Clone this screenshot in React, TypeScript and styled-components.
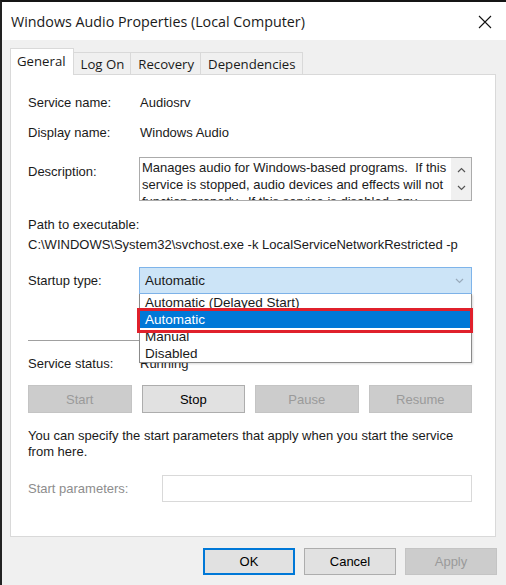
import styled, { createGlobalStyle, css } from 'styled-components';

const GlobalStyle = createGlobalStyle`
  *, *::before, *::after {
    box-sizing: border-box;
  }
  html, body {
    margin: 0;
    padding: 0;
    background: #1a1a1a;
  }
  body {
    font-family: "Liberation Sans", Arial, sans-serif;
    color: #000;
  }
`;

const Window = styled.div`
  width: 506px;
  height: 585px;
  border-top: 2px solid #151515;
  border-left: 2px solid #222;
  background: #f0f0f0;
  display: flex;
  flex-direction: column;
  overflow: hidden;
`;

const TitleBar = styled.div`
  height: 38px;
  flex-shrink: 0;
  background: #fff;
  display: flex;
  align-items: center;
  justify-content: space-between;
  padding: 1px 14px 0 9px;
  font-family: "Open Sans", "Noto Sans", sans-serif;
  font-size: 14.3px;
  color: #1a1a1a;
`;

const Body = styled.div`
  flex: 1;
  display: flex;
  flex-direction: column;
  padding: 8px 8px 0 8px;
`;

const TabRow = styled.div`
  display: flex;
  align-items: flex-end;
  height: 26px;
  position: relative;
  z-index: 1;
`;

const Tab = styled.div<{ $active?: boolean }>`
  font-family: "Open Sans", "Noto Sans", sans-serif;
  font-size: 13.2px;
  display: flex;
  align-items: center;
  border: 1px solid #d9d9d9;
  border-bottom: none;
  color: #1a1a1a;
  ${(p) =>
    p.$active
      ? css`
          height: 27px;
          padding: 0 7px 3px 6px;
          background: #fff;
          margin-bottom: -1px;
        `
      : css`
          height: 22px;
          padding: 1px 6px 0 7px;
          margin-left: -1px;
          background: #f0f0f0;
        `}
`;

const Panel = styled.div`
  height: 463px;
  flex-shrink: 0;
  background: #fff;
  border: 1px solid #d9d9d9;
  margin-right: 2px;
  padding: 17px 23px 0 17px;
  display: flex;
  flex-direction: column;
  font-size: 13px;
  color: #1a1a1a;
`;

const InfoRow = styled.div<{ $h?: number }>`
  display: grid;
  grid-template-columns: 112px 1fr;
  align-items: center;
  height: ${(p) => p.$h ?? 30}px;
  line-height: 16px;
`;

const Label = styled.span<{ $muted?: boolean }>`
  color: ${(p) => (p.$muted ? '#8d8d8d' : '#1a1a1a')};
`;

const DescRow = styled.div`
  display: grid;
  grid-template-columns: 112px 1fr;
  align-items: start;
  margin-top: 5px;
  line-height: 16px;

  & > ${Label} {
    margin-top: 7px;
  }
`;

const DescBox = styled.div`
  height: 44px;
  border: 1px solid #ababab;
  display: flex;
  margin-left: -1px;
`;

const DescText = styled.div`
  flex: 1;
  padding: 1px 0 0 2px;
  line-height: 17px;
  overflow: hidden;
`;

const ScrollBar = styled.div`
  width: 20px;
  background: #f0f0f0;
  display: flex;
  flex-direction: column;
  align-items: center;
  justify-content: space-around;
  padding: 3px 0;
`;

const PathBlock = styled.div`
  display: flex;
  flex-direction: column;
  gap: 4px;
  margin-top: 16px;
  line-height: 16px;
`;

const ComboWrap = styled.div`
  position: relative;
  margin-left: -1px;
`;

const Combo = styled.div`
  height: 27px;
  background: #cce4f7;
  border: 1px solid #7eb4ea;
  display: flex;
  align-items: center;
  justify-content: space-between;
  padding: 0 7px 0 5px;
  font-size: 13.5px;
`;

const DropList = styled.div`
  position: absolute;
  top: 27px;
  left: 0;
  right: 0;
  background: #fff;
  border: 1px solid #8a8a8a;
  border-top: none;
  box-shadow: 1px 1px 2px rgba(0, 0, 0, 0.15);
  z-index: 5;
`;

const DropItem = styled.div<{ $selected?: boolean }>`
  height: 17px;
  line-height: 17px;
  padding-left: 5px;
  font-size: 13.5px;
  white-space: nowrap;
  overflow: hidden;
  ${(p) =>
    p.$selected &&
    css`
      background: #0078d7;
      color: #fff;
    `}
`;

const Highlight = styled.div`
  position: absolute;
  left: -3px;
  right: -2px;
  top: 14px;
  height: 25px;
  border: 3px solid #e0202b;
  pointer-events: none;
`;

const Separator = styled.div`
  height: 1px;
  background: #a0a0a0;
  margin-top: 46px;
`;

const StatusRow = styled.div`
  display: grid;
  grid-template-columns: 112px 1fr;
  align-items: center;
  margin-top: 15px;
  height: 16px;
  line-height: 16px;
`;

const ButtonGrid = styled.div`
  display: grid;
  grid-template-columns: repeat(4, 1fr);
  column-gap: 10px;
  margin-top: 13px;
`;

const Button = styled.div<{ $disabled?: boolean; $default?: boolean }>`
  height: 28px;
  display: flex;
  align-items: center;
  justify-content: center;
  font-size: 13px;
  ${(p) =>
    p.$disabled
      ? css`
          background: #cccccc;
          border: 1px solid #c4c4c4;
          color: #9a9a9a;
        `
      : css`
          background: #e1e1e1;
          border: 1px solid #adadad;
          color: #000;
        `}
  ${(p) =>
    p.$default &&
    css`
      border: 2px solid #0078d7;
    `}
`;

const Hint = styled.div`
  margin-top: 15px;
  line-height: 16px;
`;

const ParamRow = styled.div`
  display: grid;
  grid-template-columns: 134px 1fr;
  align-items: center;
  margin-top: 15px;
`;

const ParamInput = styled.div`
  height: 27px;
  border: 1px solid #d9d9d9;
  background: #fff;
`;

const Footer = styled.div`
  display: flex;
  justify-content: flex-end;
  gap: 9px;
  padding-top: 11px;
  margin-right: 1px;
`;

const FooterButton = styled(Button)`
  width: 92px;
  height: 27px;
`;

const CloseIcon = () => (
  <svg width="14" height="14" viewBox="0 0 14 14">
    <path d="M1 1 L13 13 M13 1 L1 13" stroke="#111" strokeWidth="1.1" />
  </svg>
);

const Chevron = ({ up, color = '#555' }: { up?: boolean; color?: string }) => (
  <svg width="9" height="6" viewBox="0 0 9 6">
    <path
      d={up ? 'M1 5 L4.5 1.5 L8 5' : 'M1 1 L4.5 4.5 L8 1'}
      fill="none"
      stroke={color}
      strokeWidth="1.2"
    />
  </svg>
);

const startupOptions = ['Automatic (Delayed Start)', 'Automatic', 'Manual', 'Disabled'];

export default function App() {
  return (
    <>
      <GlobalStyle />
      <Window>
        <TitleBar>
          <span>Windows Audio Properties (Local Computer)</span>
          <CloseIcon />
        </TitleBar>
        <Body>
          <TabRow>
            <Tab $active>General</Tab>
            <Tab>Log On</Tab>
            <Tab>Recovery</Tab>
            <Tab>Dependencies</Tab>
          </TabRow>
          <Panel>
            <InfoRow $h={22}>
              <Label>Service name:</Label>
              <span>Audiosrv</span>
            </InfoRow>
            <InfoRow $h={38}>
              <Label>Display name:</Label>
              <span>Windows Audio</span>
            </InfoRow>
            <DescRow>
              <Label>Description:</Label>
              <DescBox>
                <DescText>
                  Manages audio for Windows-based programs.&nbsp; If this service is stopped, audio
                  devices and effects will not function properly.&nbsp; If this service is disabled,
                  any services that explicitly depend on it will fail to start
                </DescText>
                <ScrollBar>
                  <Chevron up />
                  <Chevron />
                </ScrollBar>
              </DescBox>
            </DescRow>
            <PathBlock>
              <Label>Path to executable:</Label>
              <span>C:\WINDOWS\System32\svchost.exe -k LocalServiceNetworkRestricted -p</span>
            </PathBlock>
            <InfoRow $h={27} style={{ marginTop: 14 }}>
              <Label>Startup type:</Label>
              <ComboWrap>
                <Combo>
                  <span>Automatic</span>
                  <Chevron color="#9ab" />
                </Combo>
                <DropList>
                  {startupOptions.map((opt, i) => (
                    <DropItem key={opt} $selected={i === 1}>
                      {opt}
                    </DropItem>
                  ))}
                  <Highlight />
                </DropList>
              </ComboWrap>
            </InfoRow>
            <Separator />
            <StatusRow>
              <Label>Service status:</Label>
              <span>Running</span>
            </StatusRow>
            <ButtonGrid>
              <Button $disabled>Start</Button>
              <Button>Stop</Button>
              <Button $disabled>Pause</Button>
              <Button $disabled>Resume</Button>
            </ButtonGrid>
            <Hint>
              You can specify the start parameters that apply when you start the service
              <br />
              from here.
            </Hint>
            <ParamRow>
              <Label $muted>Start parameters:</Label>
              <ParamInput />
            </ParamRow>
          </Panel>
          <Footer>
            <FooterButton $default>OK</FooterButton>
            <FooterButton>Cancel</FooterButton>
            <FooterButton $disabled>Apply</FooterButton>
          </Footer>
        </Body>
      </Window>
    </>
  );
}
